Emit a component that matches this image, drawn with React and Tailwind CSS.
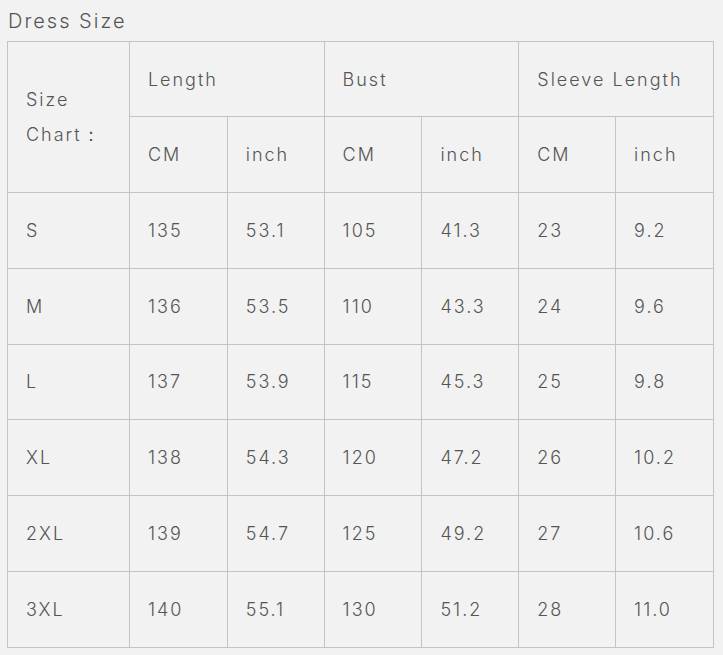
const ROWS = [
  ['S', '135', '53.1', '105', '41.3', '23', '9.2'],
  ['M', '136', '53.5', '110', '43.3', '24', '9.6'],
  ['L', '137', '53.9', '115', '45.3', '25', '9.8'],
  ['XL', '138', '54.3', '120', '47.2', '26', '10.2'],
  ['2XL', '139', '54.7', '125', '49.2', '27', '10.6'],
  ['3XL', '140', '55.1', '130', '51.2', '28', '11.0'],
];

const cell = 'border border-[#c4c4c4] pl-[18px] pr-2 align-middle font-light text-left';

export default function App() {
  return (
    <div className="min-h-[655px] w-[723px] bg-[#f2f2f2] text-[#555] font-['Inter',sans-serif] tracking-[2px]">
      <h2 className="pl-2 pt-[7px] text-[20px] leading-[28px] font-light tracking-[2px] text-[#555]">Dress Size</h2>
      <table className="ml-[7px] mt-[6px] w-[707px] border-collapse text-[18px] font-light">
        <colgroup>
          <col className="w-[122px]" />
          <col className="w-[98px]" />
          <col className="w-[97px]" />
          <col className="w-[98px]" />
          <col className="w-[97px]" />
          <col className="w-[97px]" />
          <col className="w-[98px]" />
        </colgroup>
        <thead>
          <tr className="h-[75px]">
            <th rowSpan={2} className={`${cell} leading-[35px]`}>Size<br />Chart：</th>
            <th colSpan={2} className={cell}>Length</th>
            <th colSpan={2} className={cell}>Bust</th>
            <th colSpan={2} className={cell}>Sleeve Length</th>
          </tr>
          <tr className="h-[76px]">
            <th className={cell}>CM</th>
            <th className={cell}>inch</th>
            <th className={cell}>CM</th>
            <th className={cell}>inch</th>
            <th className={cell}>CM</th>
            <th className={cell}>inch</th>
          </tr>
        </thead>
        <tbody>
          {ROWS.map(r => (
            <tr key={r[0]} className="h-[75.8px]">
              {r.map((v, i) => <td key={i} className={cell}>{v}</td>)}
            </tr>
          ))}
        </tbody>
      </table>
    </div>
  );
}
